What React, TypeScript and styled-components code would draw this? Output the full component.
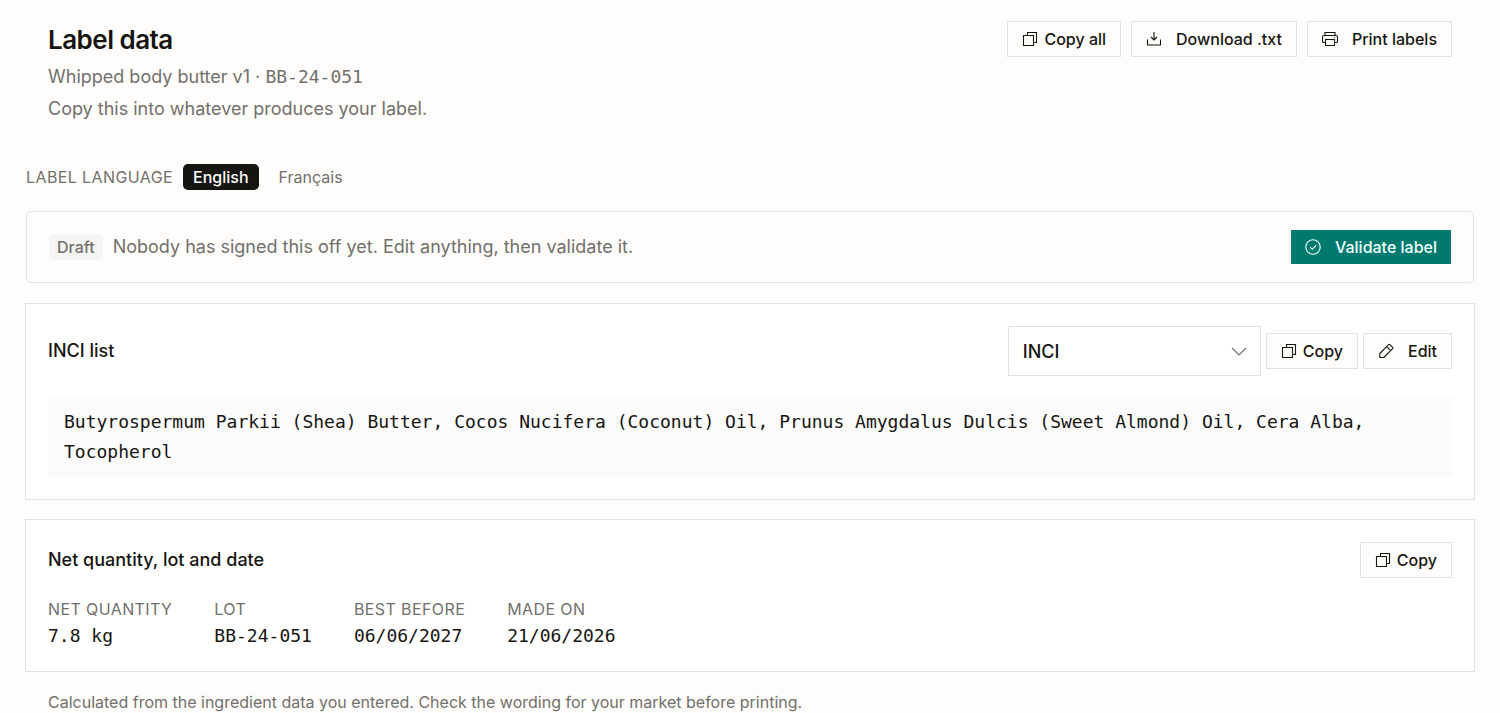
import React, { useState } from "react";
import styled, { createGlobalStyle, css } from "styled-components";

const sans = `Inter, "Liberation Sans", sans-serif`;
const mono = `"DejaVu Sans Mono", "Liberation Mono", monospace`;

const color = {
  page: "#fefdfb",
  card: "#ffffff",
  ink: "#161511",
  muted: "#72706c",
  line: "#e1e1df",
  soft: "#f5f5f3",
  code: "#fbfbfb",
  accent: "#007a6f",
};

const GlobalStyle = createGlobalStyle`
  *, *::before, *::after { box-sizing: border-box; }
  body {
    margin: 0;
    background: ${color.page};
    color: ${color.ink};
    font-family: ${sans};
    font-size: 18px;
    line-height: 28px;
  }
  h1, h2, p, dl, dt, dd { margin: 0; }
  button, select { font-family: inherit; color: inherit; }
`;

const Page = styled.main`
  display: flex;
  flex-direction: column;
  gap: 21px;
  padding: 21px 26px 0;
`;

const Header = styled.header`
  display: flex;
  align-items: flex-start;
  justify-content: space-between;
  padding: 0 22px 18px;
`;

const Heading = styled.div`
  display: flex;
  flex-direction: column;
`;

const Title = styled.h1`
  font-size: 26px;
  line-height: 38px;
  font-weight: 600;
  letter-spacing: -0.02em;
  margin-bottom: 2px;
`;

const Subtitle = styled.p`
  color: ${color.muted};
  line-height: 32px;
`;

const Mono = styled.span`
  font-family: ${mono};
`;

const Actions = styled.div<{ $gap: number }>`
  display: flex;
  align-items: center;
  gap: ${(p) => p.$gap}px;
`;

const Button = styled.button<{ $primary?: boolean; $wide?: boolean }>`
  display: inline-flex;
  align-items: center;
  gap: ${(p) => (p.$wide ? 14 : 6)}px;
  height: 36px;
  padding: 0 14px;
  border: 1px solid ${color.line};
  background: ${color.page};
  font-size: 16px;
  line-height: 22px;
  font-weight: 500;
  white-space: nowrap;
  cursor: pointer;
  ${(p) =>
    p.$primary &&
    css`
      height: 34px;
      border: 0;
      background: ${color.accent};
      color: #f2fffc;
    `}
`;

const Glyph = styled.svg`
  width: 16px;
  height: 16px;
  flex: none;
  fill: none;
  stroke: currentColor;
  stroke-width: 1.1;
`;

const Languages = styled.div`
  display: flex;
  align-items: center;
  gap: 10px;
`;

const Caption = styled.span`
  color: ${color.muted};
  font-size: 16px;
  line-height: 26px;
  letter-spacing: 0.025em;
  text-transform: uppercase;
`;

const LanguageButton = styled.button<{ $active: boolean }>`
  height: 26px;
  padding: 0 10px;
  border: 0;
  border-radius: 5px;
  font-size: 16px;
  line-height: 26px;
  font-weight: ${(p) => (p.$active ? 500 : 400)};
  background: ${(p) => (p.$active ? color.ink : "transparent")};
  color: ${(p) => (p.$active ? color.page : color.muted)};
  cursor: pointer;
`;

const Banner = styled.section`
  display: flex;
  align-items: center;
  justify-content: space-between;
  padding: 18px 22px;
  border: 1px solid ${color.line};
  border-radius: 5px;
`;

const Status = styled.div`
  display: flex;
  align-items: center;
  gap: 10px;
  color: ${color.muted};
`;

const Badge = styled.span`
  padding: 0 8px;
  border-radius: 5px;
  background: ${color.soft};
  font-size: 16px;
  line-height: 26px;
  font-weight: 500;
`;

const Card = styled.section<{ $gap: number }>`
  display: flex;
  flex-direction: column;
  gap: ${(p) => p.$gap}px;
  padding: 22px;
  background: ${color.card};
  box-shadow: 0 0 0 1px ${color.line};
`;

const CardHead = styled.div`
  display: flex;
  align-items: center;
  justify-content: space-between;
`;

const CardTitle = styled.h2`
  font-size: 18px;
  line-height: 28px;
  font-weight: 500;
`;

const SelectBox = styled.label`
  position: relative;
  display: block;
  width: 253px;
`;

const Select = styled.select`
  display: block;
  width: 100%;
  height: 50px;
  padding: 0 40px 0 14px;
  border: 1px solid ${color.line};
  border-radius: 0;
  background: ${color.card};
  font-size: 18px;
  font-weight: 500;
  appearance: none;
`;

const Chevron = styled.svg`
  position: absolute;
  top: 17px;
  right: 14px;
  width: 16px;
  height: 16px;
  fill: none;
  stroke: ${color.muted};
  stroke-width: 1.2;
  pointer-events: none;
`;

const Ingredients = styled.p`
  padding: 10px 16px;
  background: ${color.code};
  font-family: ${mono};
  line-height: 30px;
`;

const Facts = styled.dl`
  display: flex;
  flex-wrap: wrap;
  gap: 42px;
`;

const FactName = styled(Caption).attrs({ as: "dt" })`
  line-height: 28px;
`;

const FactValue = styled.dd`
  font-family: ${mono};
  line-height: 26px;
`;

const Footnote = styled.p`
  padding: 0 22px;
  color: ${color.muted};
  font-size: 16px;
  line-height: 20px;
`;

const CopyIcon = () => (
  <Glyph viewBox="0 0 16 16" aria-hidden="true">
    <path d="M1.5 4.5h10v10h-10zM5.5 4.5v-3h9v10h-3" />
  </Glyph>
);

const DownloadIcon = () => (
  <Glyph viewBox="0 0 16 16" aria-hidden="true">
    <path d="M1.5 8.5v5.5h13V8.5M8 1v8M5 6l3 3 3-3" />
  </Glyph>
);

const PrintIcon = () => (
  <Glyph viewBox="0 0 16 16" aria-hidden="true">
    <path d="M3 4.5v-3h10v3M3.5 11.5h-2a1 1 0 0 1-1-1V6A1.5 1.5 0 0 1 2 4.5h12A1.5 1.5 0 0 1 15.5 6v4.5a1 1 0 0 1-1 1h-2M3.5 8.5h9v6h-9z" />
    <circle cx="12.2" cy="6.5" r="0.6" fill="currentColor" stroke="none" />
  </Glyph>
);

const EditIcon = () => (
  <Glyph viewBox="0 0 16 16" strokeLinejoin="round" aria-hidden="true">
    <path d="M1.8 14.5v-4L10.6 1.7a1 1 0 0 1 1.400 0l2.600 2.600a1 1 0 0 1 0 1.400L5.800 14.500zM8.700 3.600l4 4" />
  </Glyph>
);

const CheckIcon = () => (
  <Glyph viewBox="0 0 16 16" aria-hidden="true">
    <circle cx="8" cy="8" r="7.2" />
    <path d="M5 8.2l2.200 2.100L11 6.300" />
  </Glyph>
);

const facts = [
  ["Net quantity", "7.8 kg"],
  ["Lot", "BB-24-051"],
  ["Best before", "06/06/2027"],
  ["Made on", "21/06/2026"],
];

export default function App() {
  const [language, setLanguage] = useState("English");

  return (
    <>
      <GlobalStyle />
      <Page>
        <Header>
          <Heading>
            <Title>Label data</Title>
            <Subtitle>
              Whipped body butter v1 · <Mono>BB-24-051</Mono>
            </Subtitle>
            <Subtitle>Copy this into whatever produces your label.</Subtitle>
          </Heading>
          <Actions $gap={10}>
            <Button type="button"><CopyIcon />Copy all</Button>
            <Button type="button" $wide><DownloadIcon />Download .txt</Button>
            <Button type="button" $wide><PrintIcon />Print labels</Button>
          </Actions>
        </Header>

        <Languages role="group" aria-labelledby="language-caption">
          <Caption id="language-caption">Label language</Caption>
          {["English", "Français"].map((name) => (
            <LanguageButton
              key={name}
              type="button"
              $active={language === name}
              aria-pressed={language === name}
              onClick={() => setLanguage(name)}
            >
              {name}
            </LanguageButton>
          ))}
        </Languages>

        <Banner>
          <Status>
            <Badge>Draft</Badge>
            <p>Nobody has signed this off yet. Edit anything, then validate it.</p>
          </Status>
          <Button type="button" $primary $wide><CheckIcon />Validate label</Button>
        </Banner>

        <Card $gap={21}>
          <CardHead>
            <CardTitle id="inci-title">INCI list</CardTitle>
            <Actions $gap={5}>
              <SelectBox>
                <Select aria-labelledby="inci-title" defaultValue="INCI">
                  <option>INCI</option>
                </Select>
                <Chevron viewBox="0 0 16 16" aria-hidden="true">
                  <path d="M1 5l7 7 7-7" />
                </Chevron>
              </SelectBox>
              <Button type="button"><CopyIcon />Copy</Button>
              <Button type="button" $wide><EditIcon />Edit</Button>
            </Actions>
          </CardHead>
          <Ingredients>
            Butyrospermum Parkii (Shea) Butter, Cocos Nucifera (Coconut) Oil, Prunus Amygdalus
            Dulcis (Sweet Almond) Oil, Cera Alba, Tocopherol
          </Ingredients>
        </Card>

        <Card $gap={17}>
          <CardHead>
            <CardTitle>Net quantity, lot and date</CardTitle>
            <Button type="button"><CopyIcon />Copy</Button>
          </CardHead>
          <Facts>
            {facts.map(([name, value]) => (
              <div key={name}>
                <FactName>{name}</FactName>
                <FactValue>{value}</FactValue>
              </div>
            ))}
          </Facts>
        </Card>

        <Footnote>
          Calculated from the ingredient data you entered. Check the wording for your market before
          printing.
        </Footnote>
      </Page>
    </>
  );
}
